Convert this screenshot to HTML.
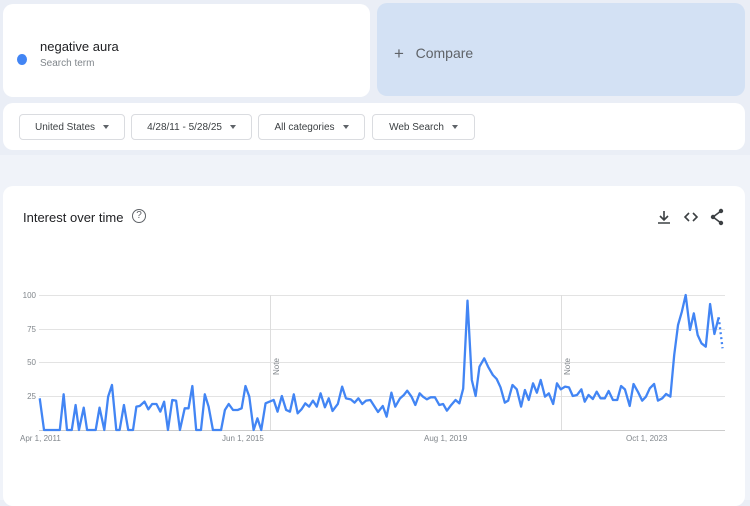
<!DOCTYPE html>
<html><head><style>
*{margin:0;padding:0;box-sizing:border-box}
body{width:750px;height:500px;overflow:hidden;background:#eaeef6;font-family:"Liberation Sans",sans-serif;position:relative}
.card{position:absolute;background:#fff;border-radius:10px}
.chip{position:absolute;top:114px;height:26px;border:1px solid #dadce0;border-radius:4px;font-size:10px;color:#3c4043;display:flex;align-items:center;justify-content:center;gap:8px;background:#fff}
.chip:after{content:"";border-left:3px solid transparent;border-right:3px solid transparent;border-top:4px solid #5f6368}
</style></head><body>
<div style="position:absolute;left:0;top:155px;width:750px;height:345px;background:#f0f3f9"></div>
<div class="card" style="left:3px;top:4px;width:367px;height:93px">
  <div style="position:absolute;left:14px;top:50px;width:10px;height:11px;border-radius:50%;background:#4285f4"></div>
  <div style="position:absolute;left:37px;top:35px;font-size:13px;color:#202124">negative aura</div>
  <div style="position:absolute;left:37px;top:54px;font-size:10px;color:#80868b">Search term</div>
</div>
<div class="card" style="left:377px;top:3px;width:368px;height:93px;background:#d3e1f4">
  <div style="position:absolute;left:17px;top:40px;font-size:14px;color:#5f6368"><span style="font-size:17px;position:relative;top:1px">+</span>&nbsp;&nbsp; Compare</div>
</div>
<div class="card" style="left:3px;top:103px;width:742px;height:47px"></div>
<div class="chip" style="left:19px;width:106px">United States</div>
<div class="chip" style="left:131px;width:121px">4/28/11 - 5/28/25</div>
<div class="chip" style="left:258px;width:107px">All categories</div>
<div class="chip" style="left:372px;width:103px">Web Search</div>
<div class="card" style="left:3px;top:186px;width:742px;height:320px">
  <div style="position:absolute;left:20px;top:24px;font-size:13px;color:#202124">Interest over time</div>
  <div style="position:absolute;left:129px;top:23px;width:14px;height:14px;border:1.2px solid #5f6368;border-radius:50%;font-size:10px;color:#5f6368;text-align:center;line-height:12px">?</div>
  <svg style="position:absolute;left:652px;top:22px" width="72" height="18" viewBox="0 0 72 18">
    <g stroke="#3c4043" stroke-width="1.6" fill="none">
      <path d="M9 3v9M5 8l4 4 4-4M3 15h12"/>
      <path d="M34 5l-4 4 4 4M38 5l4 4-4 4"/>
      <path d="M66 3l-8 6 8 6"/>
    </g>
    <g fill="#3c4043"><circle cx="66" cy="3" r="2.2"/><circle cx="58" cy="9" r="2.2"/><circle cx="66" cy="15" r="2.2"/></g>
  </svg>
</div>
<svg style="position:absolute;left:0;top:280px" width="750" height="170">
  <g stroke="#e3e3e3" stroke-width="1">
    <line x1="39" y1="15.5" x2="725" y2="15.5"/><line x1="39" y1="49.5" x2="725" y2="49.5"/><line x1="39" y1="82.5" x2="725" y2="82.5"/><line x1="39" y1="116.5" x2="725" y2="116.5"/><line x1="39" y1="150.5" x2="725" y2="150.5" stroke="#ccc"/>
    <line x1="270.5" y1="15" x2="270.5" y2="150" stroke="#ddd"/><line x1="561.5" y1="15" x2="561.5" y2="150" stroke="#ddd"/>
  </g>
  <g transform="translate(0,0) scale(0.4785,0.3333)" fill="none" stroke="#4285f4" stroke-width="2.3" stroke-linejoin="round">
    <polyline vector-effect="non-scaling-stroke" points="83,355 92,450 125,450 133,343 140,450 150,450 158,375 165,450 175,383 182,450 200,450 208,383 218,450 226,350 234,315 243,450 250,450 259,375 268,450 278,450 285,380 292,378 302,365 310,388 318,372 327,372 335,395 343,365 351,450 360,360 368,362 376,450 386,385 394,385 402,318 410,450 420,450 428,343 436,380 445,450 462,450 470,390 478,372 487,390 497,390 505,385 513,318 521,350 530,450 538,415 546,450 555,370 563,365 572,360 580,395 589,348 598,390 606,395 614,343 622,400 630,388 638,370 646,380 654,362 662,380 670,340 679,382 687,355 695,393 706,372 715,320 723,355 733,358 741,368 749,355 757,372 765,362 774,360 782,378 790,396 800,378 808,410 818,338 826,380 836,355 844,345 851,332 860,350 868,375 877,340 884,350 892,358 900,352 909,352 918,375 926,372 934,392 943,375 952,360 960,370 968,326 977,62 986,300 994,348 1002,260 1012,235 1020,260 1030,285 1038,297 1046,322 1055,368 1062,362 1071,315 1080,328 1089,380 1097,330 1105,360 1114,310 1122,338 1130,300 1139,350 1147,340 1156,372 1164,310 1172,328 1181,320 1189,322 1197,348 1206,345 1215,328 1222,365 1230,345 1239,357 1247,335 1255,355 1264,355 1272,333 1281,360 1290,360 1298,318 1306,328 1316,378 1324,312 1333,335 1342,362 1350,350 1358,325 1367,312 1375,362 1384,355 1392,342 1401,350 1409,225 1417,135 1425,95 1433,45 1442,150 1450,100 1458,165 1466,190 1475,200 1484,72 1493,162 1502,112"/>
    <polyline vector-effect="non-scaling-stroke" stroke-dasharray="2,3" points="1502,112 1510,205"/>
  </g>
  <g font-size="8" fill="#80868b" font-family="Liberation Sans,sans-serif">
    <text x="36" y="18" text-anchor="end">100</text><text x="36" y="52" text-anchor="end">75</text><text x="36" y="85" text-anchor="end">50</text><text x="36" y="119" text-anchor="end">25</text>
    <text x="20" y="161">Apr 1, 2011</text><text x="222" y="161">Jun 1, 2015</text><text x="424" y="161">Aug 1, 2019</text><text x="626" y="161">Oct 1, 2023</text>
    <text transform="translate(279,95) rotate(-90)">Note</text><text transform="translate(570,95) rotate(-90)">Note</text>
  </g>
</svg>
</body></html>
